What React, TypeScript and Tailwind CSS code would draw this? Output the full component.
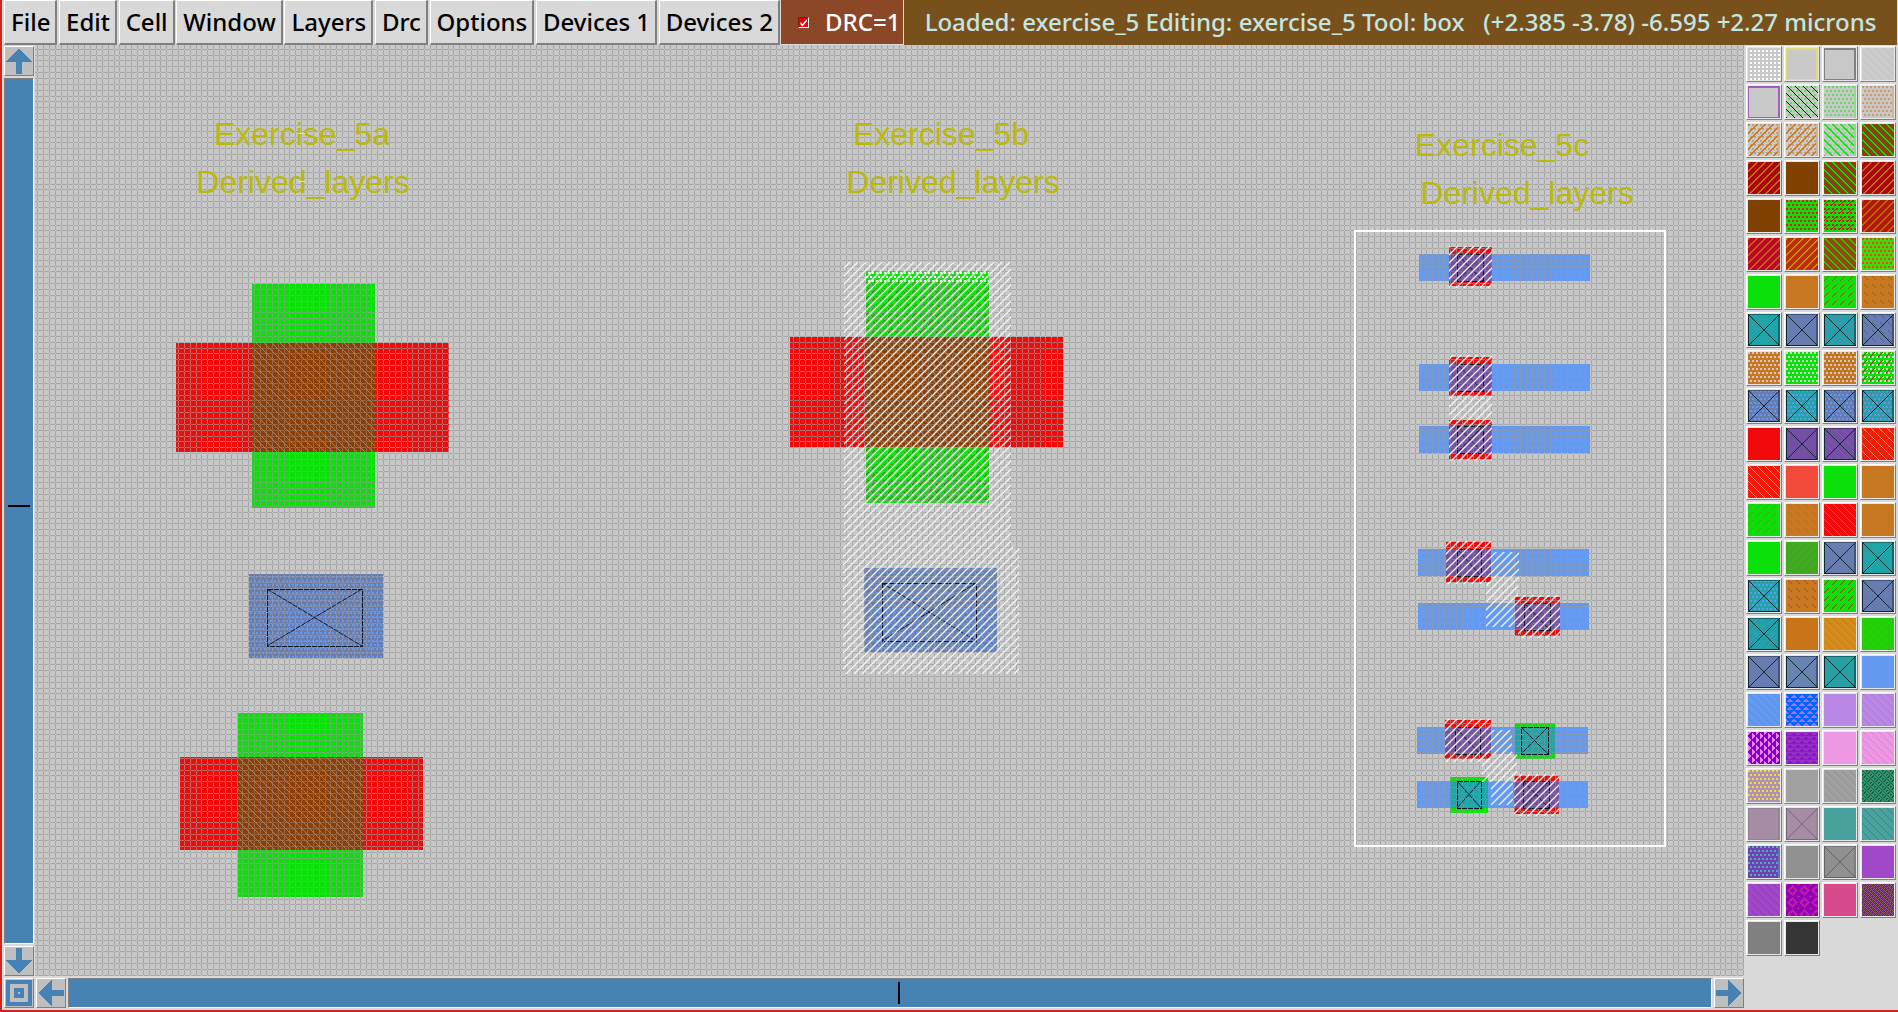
import React from "react";

type Test = (x: number, y: number) => boolean;
type Overlay = [kind: string, color: string];
interface Layer {
  fill: string;
  over?: Overlay[];
}

const tri: Test = (x, y) => {
  const xx = (x + (Math.floor(y / 4) % 2) * 4) % 8;
  const yy = y % 4;
  return xx >= yy && xx < 8 - yy;
};

const vtri: Test = (x, y) => {
  const yy = (y + (Math.floor(x / 4) % 2) * 4) % 8;
  const xx = 3 - (x % 4);
  return yy >= xx && yy < 8 - xx;
};

const STIPPLES: Record<string, Test> = {
  grid: (x, y) => x % 4 > 1 && y % 4 > 1,
  dots: (x, y) => y % 4 < 2 && (x + (Math.floor(y / 4) % 2) * 2) % 4 < 2,
  back: (x, y) => (x - y + 64) % 8 === 1,
  backBold: (x, y) => (x - y + 64) % 8 < 2,
  fwd: (x, y) => (x + y) % 8 === 1,
  fwdBold: (x, y) => (x + y) % 8 < 2,
  fwdDash: (x, y) => (x + y) % 8 === 4 && y % 8 < 5,
  backDash: (x, y) => (x - y + 64) % 8 === 2 && y % 8 < 4,
  tri,
  vtri,
  weave: (x, y) =>
    (Math.floor(x / 4) + Math.floor(y / 4)) % 2 ? (x + y) % 4 === 0 || (x + y) % 4 === 1 : (x - y + 64) % 4 === 0,
  fine: (x, y) => (x + y) % 2 === 0 && (x * 3 + y) % 8 !== 2,
  bands: (x, y) => y % 4 === 3,
  rings: (x, y) => {
    const d = Math.abs((x % 12) - 6) + Math.abs((y % 12) - 6);
    return (d > 2 && d < 6) || d > 10;
  },
  frame: (x, y) => x === 0 || y === 31 || y < 2 || x > 29,
  edge: (x, y) => x > 29,
  dim: (x, y) => x < 1 || y < 1 || y > 30 || x > 29,
  cross: (x, y) => Math.abs(x - y) < 1 || Math.abs(x + y - 31) < 1 || x === 0 || y === 31,
};

/** Runs of set pixels, as one path. */
function pixels(test: Test, size: number): string {
  let d = "";
  for (let y = 0; y < size; y++) {
    let start = -1;
    for (let x = 0; x <= size; x++) {
      const on = x < size && test(x, y);
      if (on && start < 0) start = x;
      if (!on && start >= 0) {
        d += `M${start} ${y}h${x - start}v1H${start}z`;
        start = -1;
      }
    }
  }
  return d;
}

const PATHS: Record<string, string> = {};
Object.keys(STIPPLES).forEach((k) => (PATHS[k] = pixels(STIPPLES[k], 32)));
const TILES: Record<string, string> = {};
Object.keys(STIPPLES).forEach((k) => (TILES[k] = pixels(STIPPLES[k], 8)));

const BG = "#c8c8c8";
const GREEN = "#0be00b";
const ORANGE = "#c87820";
const TEAL = "#20a4a8";
const SLATE = "#687cb0";
const RED = "#f00a0a";
const BROWN = "#8a400a";
const SKY = "#6499f0";

const contact = (fill: string, dark: string, extra: Overlay[] = []): Layer => ({
  fill,
  over: [...extra, ["dim", dark], ["cross", "#102830"]],
});
const tealBox = (extra?: Overlay[]) => contact(TEAL, "#14686c", extra);
const slateBox = (extra?: Overlay[]) => contact(SLATE, "#44527c", extra);
const plain = (fill: string): Layer => ({ fill });
const on = (fill: string, ...over: Overlay[]): Layer => ({ fill, over });

const LAYERS: Layer[] = [
  on(BG, ["grid", "#ffffff"]),
  on(BG, ["frame", "#e0dc78"]),
  on(BG, ["frame", "#808080"]),
  on(BG, ["back", "#e8e458"]),

  on(BG, ["frame", "#a060c0"]),
  on(BG, ["dots", "#60dc60"], ["back", "#102010"]),
  on(BG, ["dots", "#60dc60"], ["edge", "#90d890"]),
  on(BG, ["dots", "#d09a60"], ["edge", "#ccb494"]),

  on(BG, ["dots", "#d09a60"], ["fwdBold", ORANGE], ["edge", "#ccb494"]),
  on(BG, ["dots", "#d09a60"], ["fwdBold", ORANGE], ["edge", "#ccb494"]),
  on(BG, ["dots", "#80dc80"], ["backBold", GREEN], ["edge", "#90d890"]),
  on(BROWN, ["backBold", GREEN]),

  on("#a80a0a", ["fwdBold", "#c86a20"]),
  plain("#804000"),
  on(BROWN, ["backBold", GREEN]),
  on("#a80a0a", ["fwdBold", "#c86a20"]),

  plain("#804000"),
  on(GREEN, ["dots", "#e81010"]),
  on(GREEN, ["dots", "#e81010"], ["fwdDash", "#804000"]),
  on("#b01c0a", ["fwdBold", "#c86a10"]),

  on("#b80a20", ["fwdBold", "#d85a28"]),
  on("#b83008", ["fwdBold", "#d08a10"]),
  on("#984808", ["backBold", "#1cd00a"]),
  on("#38dc0a", ["dots", "#f84010"]),

  plain(GREEN),
  plain(ORANGE),
  on(GREEN, ["fwdDash", "#607000"]),
  on(ORANGE, ["backDash", "#a06010"]),

  tealBox(),
  slateBox(),
  tealBox([["fwdDash", SLATE]]),
  slateBox([["backDash", "#4c6090"]]),

  on(ORANGE, ["dots", "#d0c8c8"]),
  on(GREEN, ["dots", "#d0d8d0"]),
  on(ORANGE, ["dots", "#d0c8c8"], ["backDash", "#a06010"]),
  on(GREEN, ["dots", "#d0d8d0"], ["fwdDash", "#705000"]),

  slateBox([["dots", "#6098f0"]]),
  tealBox([["dots", "#6098f0"]]),
  slateBox([["dots", "#6098f0"], ["backDash", "#5070b0"]]),
  tealBox([["dots", "#6098f0"], ["fwdDash", SLATE]]),

  plain(RED),
  contact("#7450a4", "#4c3470"),
  contact("#7450a4", "#4c3470", [["back", "#6868b0"]]),
  on("#f8180a", ["back", "#b0a8a8"], ["fwdDash", "#b85008"]),

  on("#f8180a", ["back", "#c8a8b8"]),
  plain("#f44a3c"),
  plain(GREEN),
  on(ORANGE, ["backDash", "#c07420"]),

  on(GREEN, ["fwdDash", "#28b808"]),
  on(ORANGE, ["backDash", "#b46c1c"]),
  on(RED, ["back", "#d06020"]),
  on(ORANGE, ["back", "#c07420"]),

  plain(GREEN),
  on("#40a820", ["fwd", "#20c808"]),
  slateBox(),
  tealBox(),

  tealBox([["dots", "#6098f0"]]),
  on(ORANGE, ["backDash", "#a05010"]),
  on(GREEN, ["fwdDash", "#705000"]),
  slateBox([["backDash", "#5c74a8"]]),

  tealBox([["fwdDash", "#2c88a8"]]),
  plain("#c87418"),
  on("#d48c1c", ["back", "#bc7c18"]),
  on("#24d008", ["fwd", "#30c010"]),

  slateBox(),
  contact("#6884b0", "#44527c"),
  contact("#28a0a4", "#14686c"),
  plain(SKY),

  on(SKY, ["back", "#6888c0"]),
  on("#9878f0", ["tri", "#0860ff"]),
  plain("#b888e4"),
  on("#b888e4", ["back", "#b474b8"]),

  on("#e880f0", ["vtri", "#8000c8"]),
  on("#8810c8", ["tri", "#9430c4"], ["bands", "#743098"]),
  plain("#ec98e4"),
  on("#ec98e4", ["back", "#f080a0"]),

  on("#b090b8", ["dots", "#e8e030"]),
  plain("#a0a0a0"),
  on("#a0a0a0", ["back", "#b08860"]),
  on("#389080", ["weave", "#106830"]),

  on("#a68ca4", ["dim", "#948494"]),
  on("#a68ca4", ["dim", "#948494"], ["cross", "#786878"]),
  plain("#4aa09c"),
  on("#4aa09c", ["back", "#408868"]),

  on("#7040b8", ["dots", "#50b0b0"], ["edge", "#5c78b4"]),
  plain("#909090"),
  on("#909090", ["dim", "#7c7c7c"], ["cross", "#646464"]),
  plain("#a048c8"),

  on("#a048c8", ["back", "#9838a0"]),
  on("#9000b8", ["rings", "#c81c90"]),
  plain("#d44a8c"),
  on("#7818a0", ["fine", "#886060"]),

  plain("#808080"),
  plain("#363636"),
];

function Swatch({ layer, index }: { layer: Layer; index: number }) {
  return (
    <button
      aria-label={`Layer ${index + 1}`}
      className="size-9 border border-t-white border-l-white border-r-[#7f7f7f] border-b-[#7f7f7f] bg-[#e6e6e6] p-px"
    >
      <svg viewBox="0 0 32 32" className="block size-8" shapeRendering="crispEdges" aria-hidden="true">
        <rect width="32" height="32" fill={layer.fill} />
        {layer.over?.map(([kind, color], i) => (
          <path key={i} d={PATHS[kind]} fill={color} />
        ))}
      </svg>
    </button>
  );
}

const MENUS = ["File", "Edit", "Cell", "Window", "Layers", "Drc", "Options", "Devices 1", "Devices 2"];

function MenuBar() {
  return (
    <header className="flex h-[45px] shrink-0 text-2xl leading-8 font-medium">
      <nav className="flex h-[45px] w-[776px] shrink-0 justify-between">
        {MENUS.map((m) => (
          <button
            key={m}
            className="border-t border-r-2 border-b-2 border-l border-t-white border-r-[#7f7f7f] border-b-[#7f7f7f] border-l-white bg-[#d9d9d9] pr-[5px] pl-1.5 whitespace-nowrap text-black"
          >
            {m}
          </button>
        ))}
      </nav>
      <label className="flex h-[45px] w-[124px] shrink-0 items-center border-r border-b border-l border-[#d9d9d9] bg-[#8b4726] pl-[17px] whitespace-nowrap text-white">
        <span className="relative mr-4 block size-[11px]">
          <input
            type="checkbox"
            defaultChecked
            className="block size-[11px] appearance-none border border-t-[#7f2010] border-r-white border-b-white border-l-[#7f2010] bg-red-600"
          />
          <svg viewBox="0 0 11 11" className="pointer-events-none absolute inset-0 size-[11px]" aria-hidden="true">
            <path d="M2.5 5v2.5L4.500 9.500L9 4V2L4.500 7z" fill="#fff" />
          </svg>
        </span>
        DRC=1
      </label>
      <p className="mr-px min-w-0 flex-1 overflow-hidden bg-[#78501c] pt-1.5 text-center whitespace-pre text-[#c4e6e2]">
        {"Loaded: exercise_5 Editing: exercise_5 Tool: box   (+2.385 -3.78) -6.595 +2.27 microns"}
      </p>
    </header>
  );
}

function ScrollButton({ label, turn, home }: { label: string; turn?: string; home?: boolean }) {
  return (
    <button
      aria-label={label}
      className="size-[30px] shrink-0 border border-t-white border-l-white border-r-[#7f7f7f] border-b-[#7f7f7f] bg-[#bfbfbf] p-px"
    >
      <svg viewBox="0 0 26 26" className="block size-full" shapeRendering="crispEdges" aria-hidden="true">
        {home ? (
          <>
            <rect width="26" height="26" fill="#4682b4" />
            <rect x="4" y="4" width="18" height="18" fill="#bfbfbf" />
            <rect x="8" y="8" width="10" height="10" fill="#4682b4" />
            <rect x="12" y="12" width="2" height="2" fill="#bfbfbf" />
          </>
        ) : (
          <path transform={turn} d="M13 0L26 14H16V26H10V14H0z" fill="#4682b4" />
        )}
      </svg>
    </button>
  );
}

const STEP = 5.8612;

/** Grid lines from the first one on, one pixel wide. */
function gridPath(x0: number, y0: number, w: number, h: number): string {
  let d = "";
  for (let i = 0; i * STEP < w; i++) d += `M${Math.floor(x0 + i * STEP)} ${y0 - 20}v${h}h1v-${h}z`;
  for (let i = 0; i * STEP < h; i++) d += `M${x0 - 20} ${Math.floor(y0 + i * STEP)}h${w}v1h-${w}z`;
  return d;
}
const GRID = gridPath(37.84, 49.2, 3800, 2200);

type Box = [x: number, y: number, w: number, h: number];
const Rects = ({ boxes, fill, opacity }: { boxes: Box[]; fill: string; opacity?: number }) => (
  <>
    {boxes.map(([x, y, w, h], i) => (
      <rect key={i} x={x} y={y} width={w} height={h} fill={fill} fillOpacity={opacity} />
    ))}
  </>
);

const GREENS: Box[] = [
  [252, 284, 123, 224],
  [238, 713, 125, 184],
  [866, 271, 123, 232],
  [1515, 723, 40, 36],
  [1450, 777, 38, 36],
];
const REDS: Box[] = [
  [176, 343, 273, 109],
  [180, 757, 243, 93],
  [790, 337, 273, 110],
];
const OVERLAPS: Box[] = [
  [252, 343, 123, 109],
  [238, 757, 125, 93],
  [866, 337, 123, 110],
];
const PLATES: Box[] = [
  [249, 574, 134, 84],
  [864, 568, 133, 84],
];
const BARS: Box[] = [
  [1419, 254, 171, 27],
  [1419, 364, 171, 27],
  [1419, 426, 171, 27],
  [1418, 549, 171, 27],
  [1418, 603, 171, 27],
  [1417, 727, 171, 27],
  [1417, 781, 171, 27],
];
const GATES: Box[] = [
  [1449, 247, 43, 39],
  [1449, 357, 43, 39],
  [1449, 420, 43, 39],
  [1446, 542, 45, 40],
  [1515, 597, 45, 39],
  [1445, 720, 46, 39],
  [1514, 776, 45, 38],
];
const GATE_CORES: Box[] = GATES.map(([x, , w], i) => [x, BARS[i][1], w, 27]);
const VIAS: Box[] = [
  [1515, 727, 40, 27],
  [1450, 781, 38, 27],
];
const CONTACTS: Box[] = [
  [1457, 254, 26, 27],
  [1457, 364, 26, 27],
  [1457, 426, 26, 27],
  [1457, 549, 24, 27],
  [1524, 603, 26, 27],
  [1455, 727, 25, 27],
  [1523, 781, 26, 27],
  [1521, 727, 27, 27],
  [1457, 781, 24, 27],
  [267, 589, 95, 57],
  [882, 583, 94, 58],
];
const HATCHES: Box[] = [
  [844, 262, 167, 285],
  [843, 547, 176, 127],
  [1449, 246, 43, 42],
  [1449, 355, 43, 106],
  [1446, 541, 45, 43],
  [1491, 552, 28, 30],
  [1486, 582, 32, 45],
  [1518, 595, 42, 43],
  [1445, 719, 46, 43],
  [1491, 730, 21, 22],
  [1482, 752, 35, 30],
  [1491, 782, 22, 23],
  [1514, 774, 45, 42],
];
const LABELS: [string, number, number][] = [
  ["Exercise_5a", 302, 145],
  ["Derived_layers", 303, 193],
  ["Exercise_5b", 941, 145],
  ["Derived_layers", 953, 193],
  ["Exercise_5c", 1502, 156],
  ["Derived_layers", 1527, 204],
];

function Tile({ id, kind, fill }: { id: string; kind: string; fill: string }) {
  return (
    <pattern id={id} width="8" height="8" patternUnits="userSpaceOnUse">
      <path d={TILES[kind]} fill={fill} shapeRendering="crispEdges" />
    </pattern>
  );
}

function LayoutCanvas() {
  return (
    <svg className="block size-full bg-[#c8c8c8]" role="img" aria-label="Layout of exercise_5">
      <defs>
        <Tile id="green-back" kind="back" fill="#0be00b" />
        <Tile id="green-dash" kind="fwdDash" fill="#308808" />
        <Tile id="sky-dots" kind="dots" fill="#6098f0" />
        <Tile id="white-dots" kind="dots" fill="#ffffff" />
        <pattern id="white-hatch" width="8" height="8" patternUnits="userSpaceOnUse">
          <path d="M-1 9L9 -1M-1 1L1 -1M7 9L9 7" stroke="#f4f4f4" strokeWidth="1.3" />
        </pattern>
      </defs>
      <g transform="translate(-35 -45)">
        <g shapeRendering="crispEdges">
          <Rects boxes={BARS} fill={SKY} />
          <Rects boxes={REDS} fill={RED} />
          <Rects boxes={GATES} fill={RED} />
          <Rects boxes={GREENS} fill={GREEN} />
          <Rects boxes={OVERLAPS} fill={BROWN} />
          <Rects boxes={PLATES} fill={SLATE} />
          <Rects boxes={PLATES} fill="url(#sky-dots)" />
          <Rects boxes={[[866, 282, 123, 55], [866, 447, 123, 56]]} fill="url(#green-dash)" />
          <Rects boxes={GATE_CORES} fill="#7450a4" />
          <Rects boxes={VIAS} fill={TEAL} />
          <path d={GRID} fill="#989898" fillOpacity="0.7" />
          <Rects boxes={OVERLAPS} fill={BROWN} opacity={0.3} />
          <Rects boxes={OVERLAPS} fill="url(#green-back)" />
          <Rects boxes={GATE_CORES} fill="#7450a4" opacity={0.4} />
          <Rects boxes={VIAS} fill={TEAL} opacity={0.4} />
          <Rects boxes={[[866, 272, 123, 10]]} fill="url(#white-dots)" />
        </g>
        {CONTACTS.map(([x, y, w, h], i) => (
          <g key={i} fill="none" stroke="#101828" strokeDasharray="5 1">
            <rect x={x + 0.5} y={y + 0.5} width={w} height={h} shapeRendering="crispEdges" />
            <path d={`M${x} ${y}l${w} ${h}M${x + w} ${y}l-${w} ${h}`} />
          </g>
        ))}
        <Rects boxes={HATCHES} fill="url(#white-hatch)" />
        <rect x="1355" y="231" width="310" height="615" fill="none" stroke="#fff" strokeWidth="2" shapeRendering="crispEdges" />
        <g fontFamily='"Liberation Sans", Arial, sans-serif' fontSize="32" fill="#b9b90c" textAnchor="middle">
          {LABELS.map(([text, x, y]) => (
            <text key={text + x} x={x} y={y}>
              {text}
            </text>
          ))}
        </g>
        <path d="M298 133.500h7M298 181.500h7" stroke="#f4f420" />
      </g>
    </svg>
  );
}

export default function App() {
  return (
    <div className="flex h-screen w-full flex-col overflow-hidden border-b-2 border-l-2 border-[#cd2820] bg-[#d9d9d9] pl-0.5 font-['Noto_Sans',sans-serif]">
      <MenuBar />
      <div className="flex min-h-0 flex-1">
        <main className="flex min-w-0 flex-1 flex-col">
          <div className="flex min-h-0 flex-1">
            <div className="flex w-[31px] shrink-0 flex-col pt-px">
              <ScrollButton label="Scroll up" />
              <button
                aria-label="Vertical position"
                className="mt-0.5 flex min-h-0 w-[30px] flex-1 items-center justify-center border border-t-[#7f7f7f] border-r-white border-b-white border-l-[#7f7f7f] bg-[#4682b4]"
              >
                <span className="mb-2.5 h-0.5 w-[22px] bg-black" />
              </button>
              <div className="mt-0.5 flex">
                <ScrollButton label="Scroll down" turn="rotate(180 13 13)" />
              </div>
            </div>
            <div className="min-w-0 flex-1">
              <LayoutCanvas />
            </div>
          </div>
          <div className="flex h-[34px] shrink-0 items-start gap-0.5 pt-0.5">
            <ScrollButton label="Whole view" home />
            <ScrollButton label="Scroll left" turn="rotate(-90 13 13)" />
            <button
              aria-label="Horizontal position"
              className="flex h-[30px] min-w-0 flex-1 items-center justify-center border border-t-[#7f7f7f] border-r-white border-b-white border-l-[#7f7f7f] bg-[#4682b4]"
            >
              <span className="ml-[18px] h-[22px] w-0.5 bg-black" />
            </button>
            <ScrollButton label="Scroll right" turn="rotate(90 13 13)" />
          </div>
        </main>
        <aside aria-label="Layer palette" className="grid shrink-0 grid-cols-4 content-start gap-0.5 pt-px pr-0.5 pl-0.5">
          {LAYERS.map((layer, i) => (
            <Swatch key={i} layer={layer} index={i} />
          ))}
        </aside>
      </div>
    </div>
  );
}
